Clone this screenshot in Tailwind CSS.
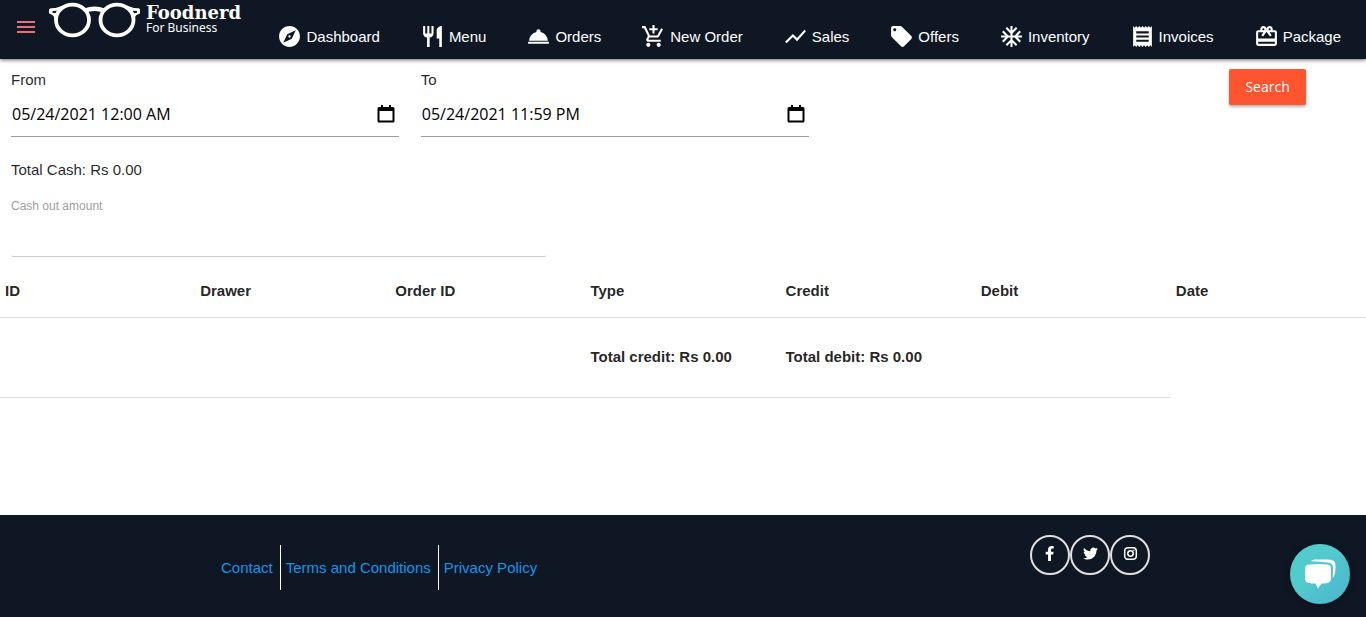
<!DOCTYPE html>
<html lang="en">
<head>
  <meta charset="UTF-8">
  <meta name="viewport" content="width=device-width, initial-scale=1.0">
  <title>Foodnerd For Business</title>
  <script src="https://cdn.jsdelivr.net/npm/@tailwindcss/browser@4"></script>
</head>
<body class="flex flex-col min-h-screen bg-white text-black/87 text-[15px] leading-[22px] font-['Liberation_Sans',Arial,sans-serif]">

  <!-- top bar -->
  <header class="flex h-[59px] bg-[#0f1724] pl-4 pr-[25px] shadow-[0_1px_4px_rgba(0,0,0,0.6)]">
    <button type="button" aria-label="Open menu" class="self-center shrink-0 mt-[-5px] text-[#ee6e73]">
      <svg class="block w-5 h-4" viewBox="0 0 20 16" fill="currentColor"><path d="M1 2h18v2H1zM1 7h18v2H1zM1 12h18v2H1z"/></svg>
    </button>
    <a href="#" class="flex shrink-0 pl-3 text-white">
      <svg class="w-[93px] h-10" viewBox="0 0 93 40" fill="none" stroke="#fff">
        <ellipse cx="24.500" cy="20" rx="16.500" ry="15.300" stroke-width="3.800"/>
        <ellipse cx="69" cy="20" rx="16.500" ry="15.300" stroke-width="3.800"/>
        <path d="M37 10.500q9.500-3.500 19 0" stroke-width="4.500"/>
        <path fill="#fff" stroke="none" fill-rule="evenodd" d="M15 5.500Q8 8.500 2.500 8.300L1 9.500v4l3 1.300q2 1 3 6l4-9zM4.500 11l4.500-.3-1.500 2.500-3-.4zM78.500 5.500q7 3 12.500 2.800l1 1.200v4l-3 1.300q-2 1-3 6l-4-9zM89 11l-4.500-.3 1.500 2.500 3-.4z"/>
      </svg>
      <span class="flex flex-col pl-[5px] pt-[5px]">
        <span class="font-['DejaVu_Serif',serif] font-bold text-[18px] leading-4">Foodnerd</span>
        <span class="font-['Noto_Sans',sans-serif] text-xs leading-[14px]">For Business</span>
      </span>
    </a>
    <nav class="ml-auto pt-6 text-white">
      <ul class="flex gap-10 whitespace-nowrap">
        <li><a href="#" class="flex items-center gap-1">
          <svg class="size-[25px]" viewBox="0 0 24 24" fill="currentColor"><path d="M12 10.900c-.61 0-1.100.49-1.100 1.100s.49 1.100 1.100 1.100c.61 0 1.100-.49 1.100-1.100s-.49-1.100-1.100-1.100zM12 2C6.480 2 2 6.480 2 12s4.480 10 10 10 10-4.480 10-10S17.520 2 12 2zm2.190 12.190L6 18l3.810-8.190L18 6l-3.810 8.190z"/></svg>
          Dashboard</a></li>
        <li><a href="#" class="flex items-center gap-1">
          <svg class="size-[25px]" viewBox="0 0 24 24" fill="currentColor"><path d="M11 9H9V2H7v7H5V2H3v7c0 2.120 1.660 3.840 3.750 3.970V22h2.500v-9.030C11.340 12.840 13 11.120 13 9V2h-2v7zm5-3v8h2.500v8H21V2c-2.760 0-5 2.240-5 4z"/></svg>
          Menu</a></li>
        <li><a href="#" class="flex items-center gap-1">
          <svg class="size-[25px]" viewBox="0 0 24 24" fill="currentColor"><path d="M2 17h20v2H2zm11.840-9.210c.1-.24.16-.51.16-.79 0-1.100-.9-2-2-2s-2 .9-2 2c0 .28.06.55.16.79C6.250 8.600 3.270 11.930 3 16h18c-.27-4.070-3.250-7.400-7.160-8.210z"/></svg>
          Orders</a></li>
        <li><a href="#" class="flex items-center gap-1">
          <svg class="size-[25px]" viewBox="0 0 24 24" fill="currentColor"><path d="M11 9h2V6h3V4h-3V1h-2v3H8v2h3v3zm-4 9c-1.100 0-1.990.9-1.990 2S5.900 22 7 22s2-.9 2-2-.9-2-2-2zm10 0c-1.100 0-1.990.9-1.990 2s.89 2 1.990 2 2-.9 2-2-.9-2-2-2zm-9.830-3.250l.03-.12.9-1.630h7.450c.75 0 1.410-.41 1.750-1.030l3.860-7.010L19.420 4h-.01l-1.100 2-2.760 5H8.530l-.13-.27L6.160 6l-.95-2-.94-2H1v2h2l3.600 7.590-1.350 2.450c-.16.28-.25.61-.25.96 0 1.100.9 2 2 2h12v-2H7.420c-.13 0-.25-.11-.25-.25z"/></svg>
          New Order</a></li>
        <li><a href="#" class="flex items-center gap-1">
          <svg class="size-[25px]" viewBox="0 0 24 24" fill="currentColor"><path d="M3.500 18.490l6-6.010 4 4L22 6.920l-1.410-1.410-7.090 7.970-4-4L2 16.990z"/></svg>
          Sales</a></li>
        <li><a href="#" class="flex items-center gap-1">
          <svg class="size-[25px]" viewBox="0 0 24 24" fill="currentColor"><path d="M21.410 11.580l-9-9C12.050 2.220 11.550 2 11 2H4c-1.100 0-2 .9-2 2v7c0 .55.22 1.050.59 1.420l9 9c.36.36.86.58 1.410.58.55 0 1.050-.22 1.410-.59l7-7c.37-.36.59-.86.59-1.410 0-.55-.23-1.060-.59-1.420zM5.500 7C4.670 7 4 6.330 4 5.500S4.670 4 5.500 4 7 4.670 7 5.500 6.330 7 5.500 7z"/></svg>
          Offers</a></li>
        <li><a href="#" class="flex items-center gap-1">
          <svg class="size-[25px]" viewBox="0 0 24 24" fill="currentColor"><path d="M22 11h-4.170l3.240-3.240-1.410-1.420L15 11h-2V9l4.660-4.660-1.420-1.410L13 6.170V2h-2v4.170L7.760 2.930 6.340 4.340 11 9v2H9L4.340 6.340 2.930 7.760 6.170 11H2v2h4.170l-3.240 3.240 1.410 1.420L9 13h2v2l-4.660 4.660 1.420 1.410L11 17.830V22h2v-4.170l3.240 3.240 1.420-1.410L13 15v-2h2l4.660 4.660 1.410-1.420L17.830 13H22z"/></svg>
          Inventory</a></li>
        <li><a href="#" class="flex items-center gap-1">
          <svg class="size-[25px]" viewBox="0 0 24 24" fill="currentColor"><path d="M18 17H6v-2h12v2zm0-4H6v-2h12v2zm0-4H6V7h12v2zM3 22l1.500-1.500L6 22l1.500-1.500L9 22l1.500-1.500L12 22l1.500-1.500L15 22l1.500-1.500L18 22l1.500-1.500L21 22V2l-1.500 1.500L18 2l-1.500 1.500L15 2l-1.500 1.500L12 2l-1.500 1.500L9 2 7.500 3.500 6 2 4.500 3.500 3 2v20z"/></svg>
          Invoices</a></li>
        <li><a href="#" class="flex items-center gap-1">
          <svg class="size-[25px]" viewBox="0 0 24 24" fill="currentColor"><path d="M20 6h-2.180c.11-.31.18-.65.18-1 0-1.660-1.340-3-3-3-1.050 0-1.960.54-2.500 1.350l-.5.67-.5-.68C10.960 2.540 10.050 2 9 2 7.340 2 6 3.340 6 5c0 .35.070.69.18 1H4c-1.110 0-1.990.89-1.990 2L2 19c0 1.110.89 2 2 2h16c1.110 0 2-.89 2-2V8c0-1.110-.89-2-2-2zm-5-2c.55 0 1 .45 1 1s-.45 1-1 1-1-.45-1-1 .45-1 1-1zM9 4c.55 0 1 .45 1 1s-.45 1-1 1-1-.45-1-1 .45-1 1-1zm11 15H4v-2h16v2zm0-5H4V8h5.080L7 10.830 8.620 12 11 8.760l1-1.360 1 1.360L15.380 12 17 10.830 14.920 8H20v6z"/></svg>
          Package</a></li>
      </ul>
    </nav>
  </header>

  <main>
    <!-- filters -->
    <form class="flex pt-[10px]">
      <div class="w-[30%] px-[11px]">
        <label for="from" class="block">From</label>
        <div class="flex items-center h-[46px] border-b border-[#9e9e9e]">
          <input id="from" type="text" value="05/24/2021 12:00 AM" class="flex-1 min-w-0 pl-px outline-none text-base text-black font-['Open_Sans',sans-serif]">
          <button type="button" aria-label="Pick start date" class="mr-[3px] text-black">
            <svg class="block size-5" viewBox="0 0 20 20" fill="currentColor"><path d="M3 3h2V1h2v2h6V1h2v2h2q1.500 0 1.500 1.500V17q0 1.500-1.500 1.500H3q-1.500 0-1.500-1.500V4.500Q1.500 3 3 3zm.5 4v9.500h13V7z"/></svg>
          </button>
        </div>
      </div>
      <div class="w-[30%] px-[11px]">
        <label for="to" class="block">To</label>
        <div class="flex items-center h-[46px] border-b border-[#9e9e9e]">
          <input id="to" type="text" value="05/24/2021 11:59 PM" class="flex-1 min-w-0 pl-px outline-none text-base text-black font-['Open_Sans',sans-serif]">
          <button type="button" aria-label="Pick end date" class="mr-[3px] text-black">
            <svg class="block size-5" viewBox="0 0 20 20" fill="currentColor"><path d="M3 3h2V1h2v2h6V1h2v2h2q1.500 0 1.500 1.500V17q0 1.500-1.500 1.500H3q-1.500 0-1.500-1.500V4.500Q1.500 3 3 3zm.5 4v9.500h13V7z"/></svg>
          </button>
        </div>
      </div>
      <div class="ml-auto w-[10%]">
        <button type="submit" class="h-9 px-4 rounded-xs bg-[#ff5430] text-white text-sm font-['Open_Sans',sans-serif] shadow-[0_2px_3px_rgba(0,0,0,0.3)]">Search</button>
      </div>
    </form>

    <div class="w-[40%] pl-[11px] pt-[22px]">
      <p>Total Cash: Rs 0.00</p>
      <label for="cash-out" class="block pt-[17px] text-xs leading-4 text-[#9e9e9e]">Cash out amount</label>
      <input id="cash-out" type="text" class="block w-full h-[43px] border-b border-[#ccc] rounded-xs outline-none">
    </div>

    <!-- drawer entries -->
    <table class="w-full table-fixed text-left font-bold">
      <thead>
        <tr class="h-[60px] border-b border-black/12">
          <th class="px-[5px] pt-2">ID</th>
          <th class="px-[5px] pt-2">Drawer</th>
          <th class="px-[5px] pt-2">Order ID</th>
          <th class="px-[5px] pt-2">Type</th>
          <th class="px-[5px] pt-2">Credit</th>
          <th class="px-[5px] pt-2">Debit</th>
          <th class="px-[5px] pt-2">Date</th>
        </tr>
      </thead>
      <tbody>
        <tr class="h-20">
          <td colspan="3" class="border-b border-black/12"></td>
          <td class="px-[5px] border-b border-black/12">Total credit: Rs 0.00</td>
          <td class="px-[5px] border-b border-black/12">Total debit: Rs 0.00</td>
          <td class="border-b border-black/12"></td>
        </tr>
      </tbody>
    </table>
  </main>

  <footer class="mt-auto bg-[#0f1724] pt-5 pb-[27px]">
    <div class="flex justify-between w-full max-w-[934px] mx-auto">
      <nav class="flex mt-[10px] leading-[45px] text-[#1296e8]">
        <a href="#" class="pl-[5px] pr-[7px] border-r border-white">Contact</a>
        <a href="#" class="pl-[5px] pr-[7px] border-r border-white">Terms and Conditions</a>
        <a href="#" class="pl-[5px] pr-[7px]">Privacy Policy</a>
      </nav>
      <div class="flex text-white">
        <a href="#" aria-label="Facebook" class="flex items-center justify-center size-10 rounded-full border-2 border-[#e3dfdf] pb-[3px]">
          <svg class="h-[15px]" viewBox="0 0 320 512" fill="currentColor"><path d="M279.140 288l14.220-92.660h-88.910v-60.130c0-25.350 12.420-50.060 52.240-50.060h40.420V6.260S260.430 0 225.360 0c-73.220 0-121.080 44.380-121.080 124.720v70.620H22.890V288h81.390v224h100.170V288z"/></svg>
        </a>
        <a href="#" aria-label="Twitter" class="flex items-center justify-center size-10 rounded-full border-2 border-[#e3dfdf] pb-[3px]">
          <svg class="h-[15px]" viewBox="0 0 512 512" fill="currentColor"><path d="M459.370 151.716c.325 4.548.325 9.097.325 13.645 0 138.720-105.583 298.558-298.558 298.558-59.452 0-114.680-17.219-161.137-47.106 8.447.974 16.568 1.299 25.340 1.299 49.055 0 94.213-16.568 130.274-44.832-46.132-.975-84.792-31.188-98.112-72.772 6.498.974 12.995 1.624 19.818 1.624 9.421 0 18.843-1.300 27.614-3.573-48.081-9.747-84.143-51.980-84.143-102.985v-1.299c13.969 7.797 30.214 12.670 47.431 13.319-28.264-18.843-46.781-51.005-46.781-87.391 0-19.492 5.197-37.360 14.294-52.954 51.655 63.675 129.300 105.258 216.365 109.807-1.624-7.797-2.599-15.918-2.599-24.040 0-57.828 46.782-104.934 104.934-104.934 30.213 0 57.502 12.670 76.670 33.137 23.715-4.548 46.456-13.320 66.599-25.340-7.798 24.366-24.366 44.833-46.132 57.827 21.117-2.273 41.584-8.122 60.426-16.243-14.292 20.791-32.161 39.308-52.628 54.253z"/></svg>
        </a>
        <a href="#" aria-label="Instagram" class="flex items-center justify-center size-10 rounded-full border-2 border-[#e3dfdf] pb-[3px]">
          <svg class="h-[15px]" viewBox="0 0 16 16" fill="none" stroke="currentColor" stroke-width="1.600"><rect x="1.800" y="1.800" width="12.400" height="12.400" rx="3.500"/><circle cx="8" cy="8" r="2.900"/><circle cx="11.600" cy="4.400" r=".8" fill="currentColor" stroke="none"/></svg>
        </a>
      </div>
    </div>
  </footer>

  <!-- chat launcher, floats over the page -->
  <button type="button" aria-label="Open chat" class="fixed right-4 bottom-[13px] size-[60px] rounded-full bg-linear-to-br from-[#52cbcd] from-40% to-[#4bb3cf] shadow-[0_1px_6px_rgba(0,0,0,0.4)]">
    <svg class="block size-[60px]" viewBox="0 0 60 60">
      <path d="M19 20.500q9-1 18 0 4 .3 4 4v10q0 4-4 4.500-2.500.5-5.500.5L28 44.500 25.500 39.500q-4 0-6.500-.5-4-.5-4-4.500v-10q0-3.700 4-4z" fill="#fff"/>
      <path d="M21 17.300Q21.500 16 24 15.500h13q8 0 8.300 4 .8 8-1.300 12.500-1 2-1.500 1.500.8-6 .5-10-.4-4.500-5-5-8-1-17-1.200z" fill="#fff"/>
    </svg>
  </button>
</body>
</html>
